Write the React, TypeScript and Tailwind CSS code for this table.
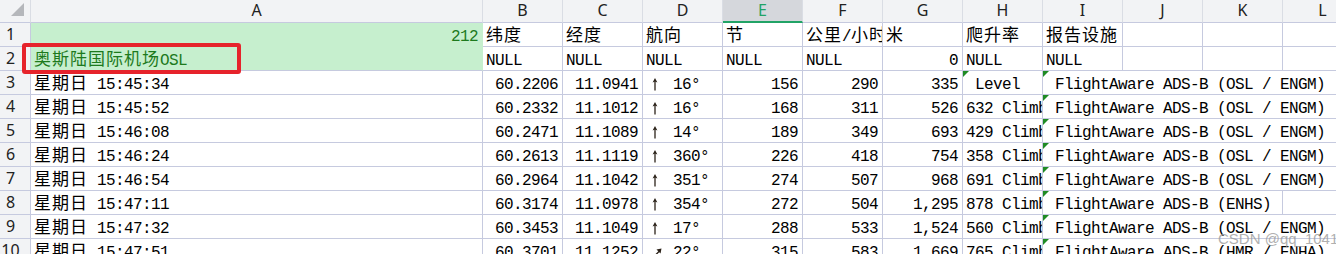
import React from 'react';

const GRID = 'border-[#c6cadf]';
const isCJK = (ch: string) => /[\u3000-\u9fff\uff00-\uffef]/.test(ch);

// split a string into CJK / latin runs so each gets its own font
const Txt = ({ s }: { s: string }) => {
  const runs: { cjk: boolean; t: string }[] = [];
  for (const ch of s) {
    const c = isCJK(ch);
    const last = runs[runs.length - 1];
    if (last && last.cjk === c) last.t += ch;
    else runs.push({ cjk: c, t: ch });
  }
  return (
    <>
      {runs.map((r, i) =>
        r.cjk ? (
          <span key={i} className="font-['Noto_Sans_CJK_SC',sans-serif] text-[17px] tracking-[1px] leading-[0]">
            {r.t}
          </span>
        ) : (
          <span key={i} className="whitespace-pre tracking-[-0.6px]">{r.t}</span>
        )
      )}
    </>
  );
};

const UpArrow = () => (
  <svg width="6" height="13" viewBox="0 0 6 13" className="inline-block align-[-2px]">
    <path d="M3 12.5V3" stroke="#2a2118" strokeWidth="1.3" />
    <path d="M3 0 L5.4 4.6 L3 3.6 L0.6 4.6Z" fill="#2a2118" />
  </svg>
);

const NeArrow = () => (
  <svg width="10" height="10" viewBox="0 0 10 10" className="inline-block align-[-1px]">
    <path d="M1 9.5 L8 2.5" stroke="#2a2118" strokeWidth="1.3" />
    <path d="M9.5 0.5 L4.5 1.5 L8.5 5.5Z" fill="#2a2118" />
  </svg>
);

const Mark = () => (
  <svg width="6" height="6" viewBox="0 0 6 6" className="absolute left-0 top-0">
    <polygon points="0,0 6,0 0,6" fill="#1f8b24" />
  </svg>
);

type Cell = {
  t?: string;
  r?: boolean;
  w: string;
  arrow?: 'up' | 'ne';
  mark?: boolean;
  cls?: string;
  noR?: boolean;
};

const DataCell = ({ c }: { c: Cell }) => (
  <div
    className={`relative shrink-0 h-full overflow-hidden whitespace-nowrap border-b ${c.noR ? '' : 'border-r'} ${GRID} px-[3px] pt-[4px] leading-[20px] ${c.w} ${
      c.r ? 'text-right pr-[4px]' : 'text-left'
    } ${c.cls ?? ''}`}
  >
    {c.mark && <Mark />}
    {c.arrow && (
      <span className="inline-block w-[27px] pl-[6px]">{c.arrow === 'up' ? <UpArrow /> : <NeArrow />}</span>
    )}
    {c.t && <Txt s={c.t} />}
  </div>
);

const Row = ({ n, cells }: { n: number; cells: Cell[] }) => (
  <div className="flex h-[24px]">
    <div className={`w-[31px] shrink-0 h-full bg-[#f2f3f5] border-r border-b ${GRID} pr-[9px] text-center leading-[23px] font-['Noto_Sans',sans-serif] text-[16px] text-[#222]`}>
      {n}
    </div>
    {cells.map((c, i) => (
      <DataCell key={i} c={c} />
    ))}
  </div>
);

const letters = ['A', 'B', 'C', 'D', 'E', 'F', 'G', 'H', 'I', 'J', 'K', 'L'];
const W = 'w-[80px]';
const GREEN = 'bg-[#c6efce] text-[#1d7a1d]';

const plain = (t: string | undefined, r = false): Cell => ({ t, r, w: W });

const headRow: Cell[] = [
  { t: '212', r: true, w: 'w-[452px]', cls: `${GREEN} border-b-[#c6efce] border-r-[#c6efce]` },
  plain('纬度'),
  plain('经度'),
  plain('航向'),
  plain('节'),
  plain('公里/小时'),
  plain('米'),
  plain('爬升率'),
  plain('报告设施'),
  plain(undefined),
  plain(undefined),
  plain(undefined),
];

const nullRow: Cell[] = [
  { t: '奥斯陆国际机场OSL', w: 'w-[452px]', cls: `${GREEN} border-r-[#c6efce]` },
  plain('NULL'),
  plain('NULL'),
  plain('NULL'),
  plain('NULL'),
  plain('NULL'),
  plain('0', true),
  plain('NULL'),
  plain('NULL'),
  plain(undefined),
  plain(undefined),
  plain(undefined),
];

const flights: [string, string, string, 'up' | 'ne', string, string, string, string, string, string][] = [
  ['15:45:34', '60.2206', '11.0941', 'up', '16°', '156', '290', '335', ' Level', '(OSL / ENGM)'],
  ['15:45:52', '60.2332', '11.1012', 'up', '16°', '168', '311', '526', '632 Climb', '(OSL / ENGM)'],
  ['15:46:08', '60.2471', '11.1089', 'up', '14°', '189', '349', '693', '429 Climb', '(OSL / ENGM)'],
  ['15:46:24', '60.2613', '11.1119', 'up', '360°', '226', '418', '754', '358 Climb', '(OSL / ENGM)'],
  ['15:46:54', '60.2964', '11.1042', 'up', '351°', '274', '507', '968', '691 Climb', '(OSL / ENGM)'],
  ['15:47:11', '60.3174', '11.0978', 'up', '354°', '272', '504', '1,295', '878 Climb', '(ENHS)'],
  ['15:47:32', '60.3453', '11.1049', 'up', '17°', '288', '533', '1,524', '560 Climb', '(OSL / ENGM)'],
  ['15:47:51', '60.3701', '11.1252', 'ne', '22°', '315', '583', '1,669', '765 Climb', '(HMR / ENHA)'],
];

const flightCells = (f: (typeof flights)[number], i: number): Cell[] => {
  const short = f[9] === '(ENHS)';
  const cells: Cell[] = [
    { t: `星期日 ${f[0]}`, w: 'w-[452px]' },
    plain(f[1], true),
    plain(f[2], true),
    { t: f[4], w: W, arrow: f[3] },
    plain(f[5], true),
    plain(f[6], true),
    plain(f[7], true),
    { t: f[8], w: W, mark: i === 0 },
    { t: ` FlightAware ADS-B ${f[9]}`, w: short ? 'w-[240px]' : 'w-[320px]', mark: true, cls: 'overflow-visible', noR: !short },
  ];
  if (short) cells.push(plain(undefined));
  return cells;
};

export default function App() {
  return (
    <div className="relative w-[1336px] h-[254px] overflow-hidden bg-white font-['Liberation_Mono','Noto_Sans_CJK_SC',monospace] text-[16px] text-black">
      {/* column letters */}
      <div className="flex h-[23px] bg-[#f2f3f5] font-['Noto_Sans',sans-serif] text-[16px] text-[#222]">
        <div className={`w-[31px] shrink-0 h-full flex justify-end items-end pr-[6px] pb-[6px] border-r border-r-[#dadde4] border-b ${GRID}`}>
          <svg width="13" height="13" viewBox="0 0 13 13">
            <polygon points="0,13 13,13 13,0" fill="#b5b7bb" />
          </svg>
        </div>
        {letters.map((l) => (
          <div
            key={l}
            className={`shrink-0 h-full flex justify-center items-start pt-[1px] leading-[18px] border-r border-r-[#dadde4] ${l === 'A' ? 'w-[452px]' : W} ${
              l === 'E' ? 'bg-[#d5d7dc] text-[#21a366] border-b-2 border-b-[#21a366]' : `border-b ${GRID}`
            }`}
          >
            {l}
          </div>
        ))}
      </div>

      <Row n={1} cells={headRow} />
      <Row n={2} cells={nullRow} />
      {flights.map((f, i) => (
        <Row key={i} n={i + 3} cells={flightCells(f, i)} />
      ))}

      {/* highlight box drawn over A2 */}
      <div className="absolute left-[22px] top-[43px] w-[219px] h-[31px] rounded-[3px] border-[4px] border-[#e6232b]" />

      <div className="absolute left-[1218px] top-[228px] whitespace-nowrap font-['Liberation_Sans',sans-serif] text-[15px] text-[#9b9b9b]/80">
        CSDN @qq_1041
      </div>
    </div>
  );
}
